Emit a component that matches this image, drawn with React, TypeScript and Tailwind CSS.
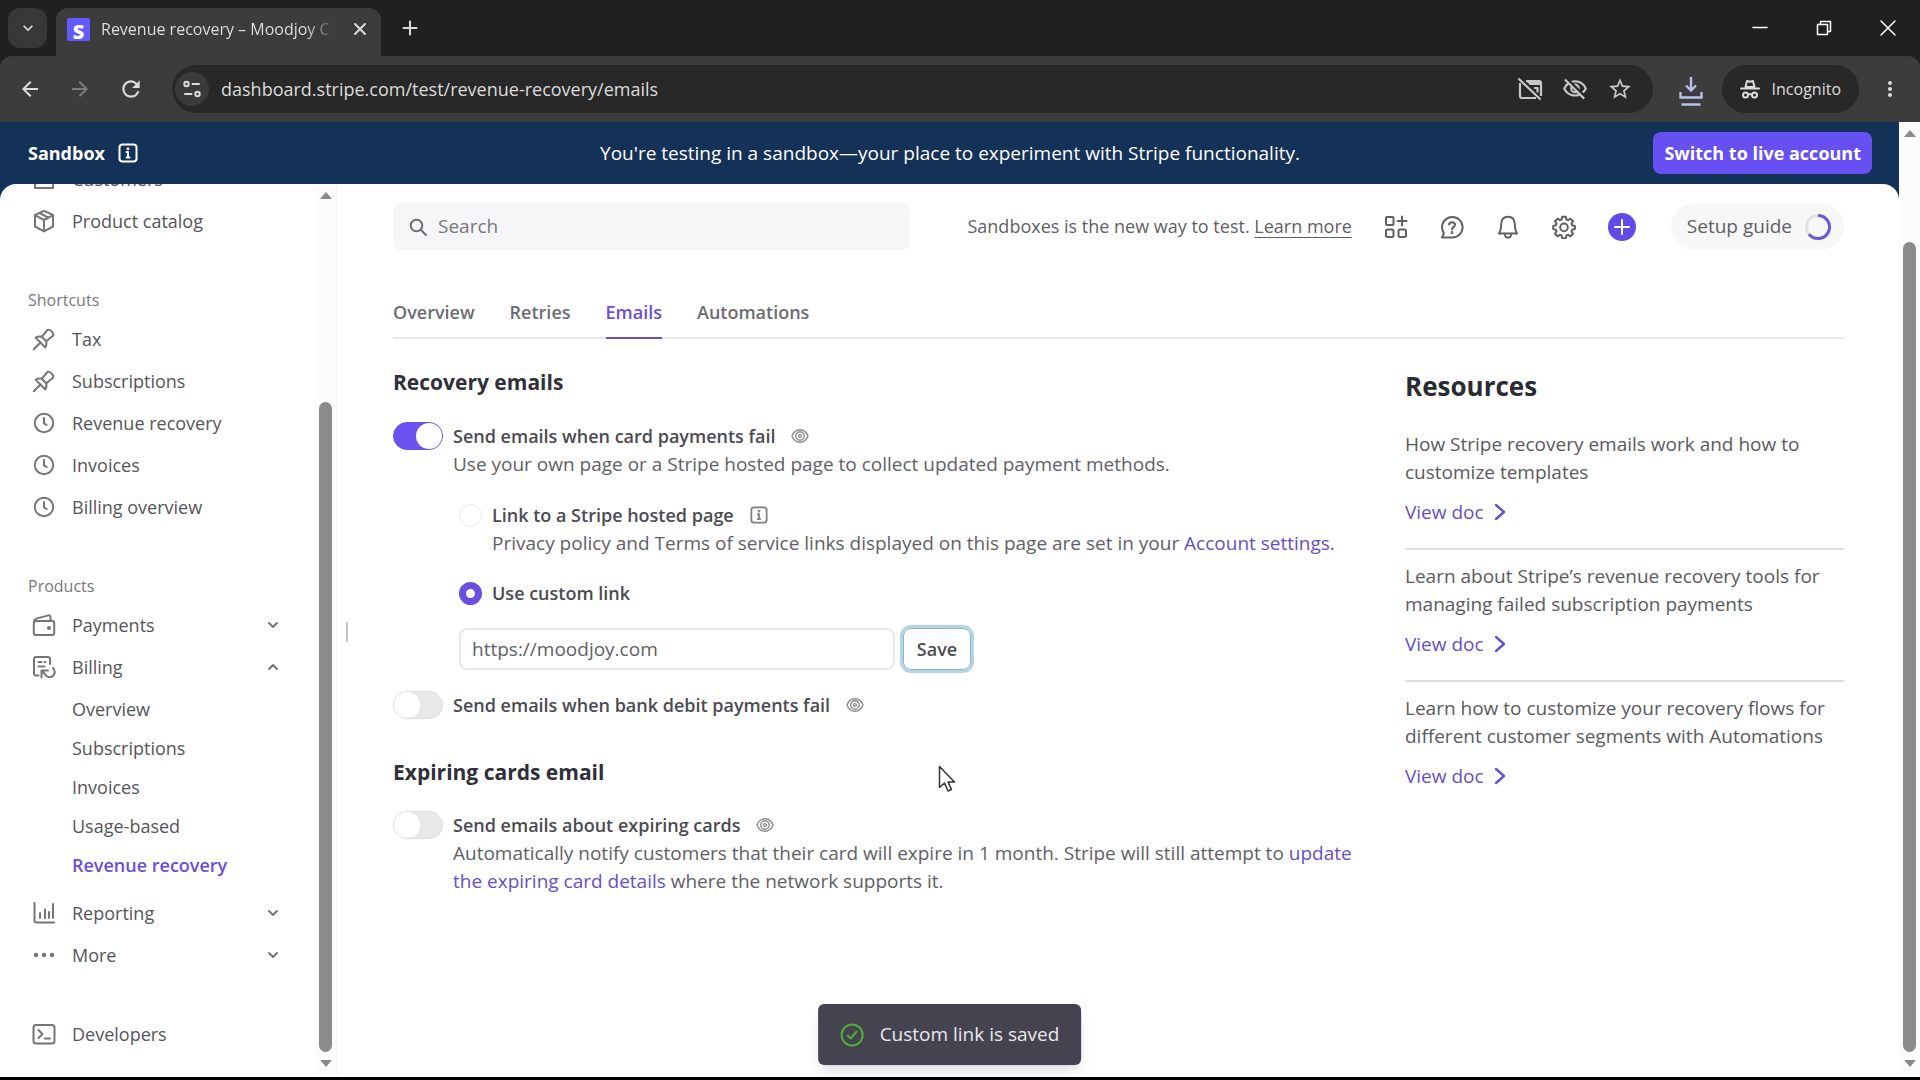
import React from "react";
import type { ReactNode } from "react";
import {
  MdArrowBack,
  MdArrowForward,
  MdRefresh,
  MdStarOutline,
  MdMoreVert,
  MdOutlineVisibilityOff,
  MdKeyboardArrowDown,
} from "react-icons/md";

type IconProps = { children: ReactNode; className?: string; box?: string; width?: number };

function Svg({ children, className = "size-6", box = "0 0 24 24", width = 2 }: IconProps) {
  return (
    <svg
      viewBox={box}
      className={`shrink-0 ${className}`}
      fill="none"
      stroke="currentColor"
      strokeWidth={width}
      strokeLinecap="round"
      strokeLinejoin="round"
      aria-hidden="true"
    >
      {children}
    </svg>
  );
}

const PersonIcon = () => (
  <Svg>
    <circle cx="12" cy="7" r="4" />
    <path d="M3 21v-2.5a4 4 0 0 1 4-4h10a4 4 0 0 1 4 4V21z" />
  </Svg>
);
const BoxIcon = () => (
  <Svg>
    <path d="M12 1.800 21 6v11.500L12 22.400 3 17.500V6z" />
    <path d="M3.300 6.400 12 11l8.700-4.600M12 11v11M7.500 4l8.800 4.600" />
  </Svg>
);
const PinIcon = () => (
  <Svg>
    <path d="M1.800 22.200 8.500 15.500" />
    <path d="M3.600 10.600c2.600-1.300 4.300-1.200 6.200-.9l4.500-5.200c.6-1.400 1.500-2.200 3-1.600 1.700.7 3.200 2.200 3.900 3.900.5 1.500-.3 2.400-1.600 3l-5.300 4.500c.4 2 .4 3.700-1 6.200z" />
    <path d="M9.800 9.700l4.500 4.600" />
  </Svg>
);
const ClockIcon = () => (
  <Svg>
    <circle cx="12" cy="12" r="9.200" />
    <path d="M12 7v5.300l2.600 1.700" />
  </Svg>
);
const WalletIcon = () => (
  <Svg>
    <rect x="1.800" y="8" width="20.400" height="14" rx="2" />
    <path d="M2 9.500c0-2.300.7-3.500 3-4.100l11.500-3c1.300-.3 2 .4 2 1.600V8" />
    <circle cx="17" cy="15" r="1" fill="currentColor" />
  </Svg>
);
const BillingIcon = () => (
  <Svg>
    <path d="M6.500 20.500H4a2 2 0 0 1-2-2V4a2 2 0 0 1 2-2h12a2 2 0 0 1 2 2v5" />
    <path d="M6.500 7h3M12.500 7h1M6.500 11.500h6" />
    <path d="M9.500 22.500v-7h6.500M10 16l4.500 5c3.500 2.600 8.200.3 8.200-4 0-1.700-.6-3-1.700-4" />
  </Svg>
);
const ReportIcon = () => (
  <Svg>
    <path d="M2.500 2v17.500a2 2 0 0 0 2 2H22M8 12v5M13 8.500V17M17 11v6M21 3v14" />
  </Svg>
);
const MoreIcon = () => (
  <Svg>
    <circle cx="4" cy="12" r="1.200" fill="currentColor" />
    <circle cx="12" cy="12" r="1.200" fill="currentColor" />
    <circle cx="20" cy="12" r="1.200" fill="currentColor" />
  </Svg>
);
const TerminalIcon = () => (
  <Svg>
    <rect x="1.500" y="3" width="21" height="18.500" rx="2.500" />
    <path d="m6.500 8 4 4-4 4M13 16.500h5" />
  </Svg>
);
const InfoSquare = ({ className = "size-5" }: { className?: string }) => (
  <Svg className={className} box="0 0 20 20">
    <rect x="1.500" y="1.500" width="17" height="17" rx="3" />
    <path d="M8.500 9H10v5.500M8.500 14.500h3" />
    <circle cx="10" cy="5.800" r=".5" fill="currentColor" />
  </Svg>
);
const EyeIcon = () => (
  <Svg className="size-[18px]" box="0 0 18 18" width={1.4}>
    <path d="M1 9c1.500-4 4.500-6.200 8-6.200S15.500 5 17 9c-1.500 4-4.500 6.200-8 6.200S2.500 13 1 9z" />
    <circle cx="9" cy="9" r="4.200" />
    <circle cx="9" cy="9" r="1.400" />
  </Svg>
);
const Chevron = ({ up = false }: { up?: boolean }) => (
  <Svg className="size-3" box="0 0 12 12" width={2}>
    <path d={up ? "M2 8l4-4 4 4" : "M2 4l4 4 4-4"} />
  </Svg>
);

function BrowserChrome() {
  return (
    <header className="shrink-0 bg-[#202020] text-[#dcdcdc]">
      <div className="flex h-14 items-end pl-2">
        <button aria-label="Search tabs" className="mb-2 grid h-10 w-[39px] place-items-center rounded-xl bg-[#383838]">
          <MdKeyboardArrowDown className="size-5" />
        </button>
        <div className="ml-[9px] flex h-12 w-[325px] items-center rounded-t-xl bg-[#3c3c3c] pr-3 pb-1.5 pl-[11px]">
          <span className="grid size-[23px] shrink-0 place-items-center rounded-xs bg-[#635bff] text-xl font-extrabold text-white">
            S
          </span>
          <span className="ml-[11px] w-[233px] shrink-0 bg-linear-to-r from-[#e3e3e3] from-88% to-[#4a4a4a] bg-clip-text text-base whitespace-nowrap text-transparent">
            Revenue recovery – Moodjoy C
          </span>
          <button aria-label="Close tab" className="ml-[18px]">
            <Svg className="size-4" box="0 0 16 16">
              <path d="m3 3 10 10M13 3 3 13" />
            </Svg>
          </button>
        </div>
        <button aria-label="New tab" className="mb-5 ml-[21px]">
          <Svg className="size-4" box="0 0 16 16">
            <path d="M8 1.500v13M1.500 8h13" />
          </Svg>
        </button>
        <div className="mb-5 ml-auto flex gap-12 pr-6 text-white">
          <button aria-label="Minimize">
            <Svg className="size-4" box="0 0 16 16" width={1.500}>
              <path d="M1 7.500h14" />
            </Svg>
          </button>
          <button aria-label="Restore">
            <Svg className="size-4" box="0 0 16 16" width={1.500}>
              <path d="M1.500 4.500h10v10h-10zM4.500 4V1.500h10v10H12" />
            </Svg>
          </button>
          <button aria-label="Close window">
            <Svg className="size-4" box="0 0 16 16" width={1.500}>
              <path d="M1 1l14 14M15 1 1 15" />
            </Svg>
          </button>
        </div>
      </div>
      <div className="flex h-[66px] items-center rounded-t-xl bg-[#3c3c3c] pr-[18px] pl-[18px]">
        <button aria-label="Back">
          <MdArrowBack className="size-6" />
        </button>
        <button aria-label="Forward" className="ml-[26px] text-[#7d7d7d]">
          <MdArrowForward className="size-6" />
        </button>
        <button aria-label="Reload" className="ml-[26px]">
          <MdRefresh className="size-[26px]" />
        </button>
        <div className="ml-[28px] flex h-12 flex-1 items-center rounded-full bg-[#282828] pr-5 pl-[3px]">
          <span className="grid size-[34px] shrink-0 place-items-center rounded-full bg-[#3a3a3a]">
            <Svg className="size-5" box="0 0 20 20">
              <circle cx="4.500" cy="5" r="2.200" />
              <path d="M10.500 5H17M3 15h6.500" />
              <circle cx="15.500" cy="15" r="2.200" />
            </Svg>
          </span>
          <input
            aria-label="Address"
            className="ml-3 min-w-0 flex-1 bg-transparent text-[18px] outline-none"
            defaultValue="dashboard.stripe.com/test/revenue-recovery/emails"
          />
          <div className="flex items-center gap-[19px] text-[#c7c7c7]">
            <Svg className="size-[26px]" box="0 0 26 26" width={2.200}>
              <path d="M3 7v13a2 2 0 0 0 2 2h14M9 5h13a2 2 0 0 1 2 2v13M1.500 2.500l22 21M17 12h3.500v4.500" strokeLinecap="butt" />
              <path d="M9 5h14v4H13z" fill="currentColor" stroke="none" />
            </Svg>
            <MdOutlineVisibilityOff className="size-[26px]" />
            <MdStarOutline className="size-[26px]" />
          </div>
        </div>
        <button aria-label="Downloads" className="mt-1 ml-[26px] text-[#b9c1ea]">
          <Svg className="h-[30px] w-6" box="0 0 24 30" width={2.400}>
            <path d="M12 1v13M7 9.500l5 5 5-5M1.500 16v5.500h21V16M2.500 28.500h19" strokeLinecap="butt" strokeLinejoin="miter" />
          </Svg>
        </button>
        <button aria-label="Incognito" className="ml-[19px] flex h-12 items-center gap-3 rounded-full bg-[#282828] px-[18px] text-base">
          <Svg className="size-5" box="0 0 20 20">
            <path d="M5.500 8 7 2l3 .8L13 2l1.500 6z" />
            <path d="M1 9.500h18M8.800 15.500c.8-.6 1.600-.6 2.400 0" />
            <circle cx="5.500" cy="16" r="2.500" />
            <circle cx="14.500" cy="16" r="2.500" />
          </Svg>
          Incognito
        </button>
        <button aria-label="Browser menu" className="ml-[19px]">
          <MdMoreVert className="size-6" />
        </button>
      </div>
    </header>
  );
}

function Scrollbar({ top }: { top: string }) {
  return (
    <div aria-hidden="true" className="flex w-[21px] shrink-0 flex-col items-center bg-[#fcfcfc] pt-2 pb-2.5">
      <span className="border-x-[6px] border-b-[7px] border-x-transparent border-b-[#8b8b8b]" />
      <span className={`mb-2 w-[13px] flex-1 rounded-full bg-[#8b8b8b] ${top}`} />
      <span className="border-x-[6px] border-t-[7px] border-x-transparent border-t-[#8b8b8b]" />
    </div>
  );
}

function NavItem({ icon, label, chevron }: { icon: ReactNode; label: string; chevron?: "up" | "down" }) {
  return (
    <a href="#" className="flex h-[42px] shrink-0 items-center pr-9 pl-1">
      <span className="text-[#75757a]">{icon}</span>
      <span className="ml-4">{label}</span>
      {chevron && (
        <span className="ml-auto text-[#75757a]">
          <Chevron up={chevron === "up"} />
        </span>
      )}
    </a>
  );
}

function NavHeading({ children }: { children: ReactNode }) {
  return <h3 className="mt-[46px] mb-1.5 shrink-0 text-base leading-6 text-[#77777c]">{children}</h3>;
}

const billingPages = ["Overview", "Subscriptions", "Invoices", "Usage-based", "Revenue recovery"];

function Sidebar() {
  return (
    <aside className="flex w-[337px] shrink-0 border-r border-[#f4f4f5]">
      <nav
        aria-label="Dashboard"
        className="flex min-w-0 flex-1 flex-col justify-end overflow-hidden pb-[22px] pl-7 text-[18px] text-[#55555a]"
      >
        <NavItem icon={<PersonIcon />} label="Customers" />
        <NavItem icon={<BoxIcon />} label="Product catalog" />
        <NavHeading>Shortcuts</NavHeading>
        <NavItem icon={<PinIcon />} label="Tax" />
        <NavItem icon={<PinIcon />} label="Subscriptions" />
        <NavItem icon={<ClockIcon />} label="Revenue recovery" />
        <NavItem icon={<ClockIcon />} label="Invoices" />
        <NavItem icon={<ClockIcon />} label="Billing overview" />
        <NavHeading>Products</NavHeading>
        <NavItem icon={<WalletIcon />} label="Payments" chevron="down" />
        <NavItem icon={<BillingIcon />} label="Billing" chevron="up" />
        <div className="mt-0.5 mb-[7px] flex shrink-0 flex-col pl-[44px]">
          {billingPages.map((page) => (
            <a
              key={page}
              href="#"
              className="flex h-[39px] items-center aria-[current=page]:font-semibold aria-[current=page]:text-[#6a4fd6]"
              aria-current={page === "Revenue recovery" ? "page" : undefined}
            >
              {page}
            </a>
          ))}
        </div>
        <NavItem icon={<ReportIcon />} label="Reporting" chevron="down" />
        <NavItem icon={<MoreIcon />} label="More" chevron="down" />
        <div className="mt-[37px]">
          <NavItem icon={<TerminalIcon />} label="Developers" />
        </div>
      </nav>
      <Scrollbar top="mt-[203px]" />
    </aside>
  );
}

function TopBar() {
  return (
    <div className="flex h-[47px] items-center text-[18px] text-[#5f5f64]">
      <label className="flex h-full w-[517px] items-center gap-[11px] rounded-lg bg-[#f6f6f8] pl-4">
        <Svg className="size-[18px] text-[#6b6b70]" box="0 0 18 18" width={2}>
          <circle cx="7.500" cy="7.500" r="5.800" />
          <path d="m12 12 5 5" />
        </Svg>
        <input
          aria-label="Search"
          placeholder="Search"
          className="min-w-0 flex-1 bg-transparent text-[19px] outline-none placeholder:text-[#77777c]"
        />
      </label>
      <p className="ml-auto whitespace-nowrap">
        Sandboxes is the new way to test.{" "}
        <a href="#" className="underline underline-offset-4">
          Learn more
        </a>
      </p>
      <div className="ml-8 flex items-center gap-8">
        <button aria-label="Apps">
          <Svg>
            <rect x="2" y="2" width="7.500" height="8" rx="1" />
            <rect x="2" y="14.500" width="7.500" height="7.500" rx="1.500" />
            <rect x="14.500" y="14.500" width="7.500" height="7.500" rx="1.500" />
            <path d="M18 1.500v9M13.500 6h9" />
          </Svg>
        </button>
        <button aria-label="Help">
          <Svg>
            <path d="M2 22.500h10.500A10.300 10.300 0 1 0 2 12.200c0 2.500.8 4.500 2 6.100z" />
            <path d="M9 9.600C9.300 8 10.500 7.200 12 7.200c1.700 0 3 1 3 2.600 0 2.200-3 2.400-3 4.600" />
            <circle cx="12" cy="17.500" r=".5" fill="currentColor" />
          </Svg>
        </button>
        <button aria-label="Notifications">
          <Svg>
            <path d="M3 18.500c1.600-2 2-4 2.200-9.500C5.400 4.500 8 1.800 12 1.800s6.600 2.700 6.800 7.200c.2 5.500.6 7.500 2.200 9.500z" />
            <path d="M9 20c.2 1.700 1.300 2.700 3 2.700s2.800-1 3-2.700" />
          </Svg>
        </button>
        <button aria-label="Settings">
          <Svg>
            <path d="m10.200 1.800h3.600l.6 2.700 1.700.7 2.400-1.500 2.500 2.500-1.500 2.400.7 1.700 2.700.6v3.200l-2.700.6-.7 1.700 1.500 2.400-2.500 2.500-2.400-1.500-1.700.7-.6 2.700h-3.600l-.6-2.700-1.700-.7-2.400 1.500L3 18.800l1.500-2.400-.7-1.700-2.600-.6v-3.200l2.600-.6.7-1.700L3 6.200l2.500-2.500 2.400 1.500 1.700-.7z" />
            <circle cx="12" cy="12.400" r="3.800" />
          </Svg>
        </button>
      </div>
      <button aria-label="Create" className="ml-8 grid size-7 place-items-center rounded-full bg-[#5f4ce6] text-white">
        <Svg className="size-4" box="0 0 16 16">
          <path d="M8 1v14M1 8h14" />
        </Svg>
      </button>
      <button className="ml-[35px] flex h-full items-center gap-3 rounded-full bg-[#f7f7f8] pr-3 pl-4 text-[19px] whitespace-nowrap">
        Setup guide
        <Svg className="size-7" box="0 0 28 28" width={3}>
          <circle cx="14" cy="14" r="11.500" stroke="#e2e2e6" />
          <path d="M14 2.500a11.500 11.500 0 1 1-9 18.600" stroke="#6f58d8" strokeLinecap="butt" />
        </Svg>
      </button>
    </div>
  );
}

function Toggle({ id, on = false }: { id: string; on?: boolean }) {
  return (
    <input
      id={id}
      type="checkbox"
      role="switch"
      defaultChecked={on}
      className="h-7 w-[50px] shrink-0 appearance-none rounded-full border border-[#dedee1] bg-[#e8e8ea] before:block before:size-[26px] before:rounded-full before:bg-white checked:border-[#6a4fe8] checked:bg-[#6b52f0] checked:before:translate-x-[22px]"
    />
  );
}

function Setting({ id, label, on, children }: { id: string; label: string; on?: boolean; children?: ReactNode }) {
  return (
    <div className="flex gap-[10px]">
      <Toggle id={id} on={on} />
      <div className="min-w-0">
        <div className="flex items-center gap-4">
          <label htmlFor={id} className="text-[18px] font-semibold text-[#4b4b52]">
            {label}
          </label>
          <button aria-label={`Preview: ${label}`} className="text-[#8a8a8f]">
            <EyeIcon />
          </button>
        </div>
        {children}
      </div>
    </div>
  );
}

const radioClass =
  "mt-[3px] size-[23px] shrink-0 appearance-none rounded-full border border-[#e6e6e8] bg-white checked:border-[7px] checked:border-[#6a4fe0]";

function EmailSettings() {
  return (
    <div className="text-[19px] leading-7 text-[#606066]">
      <h2 className="mt-[29px] mb-[26px] text-[21px] font-bold text-[#30303a]">Recovery emails</h2>
      <Setting id="card-fail" label="Send emails when card payments fail" on>
        <p>Use your own page or a Stripe hosted page to collect updated payment methods.</p>
      </Setting>
      <div className="pl-[66px]">
        <div className="mt-[23px] flex gap-[10px]">
          <input id="hosted" type="radio" name="link" className={radioClass} />
          <div>
            <div className="flex items-center gap-4">
              <label htmlFor="hosted" className="text-[18px] font-semibold text-[#4b4b52]">
                Link to a Stripe hosted page
              </label>
              <InfoSquare className="size-[18px] text-[#808086]" />
            </div>
            <p>
              Privacy policy and Terms of service links displayed on this page are set in your{" "}
              <a href="#" className="text-[#6650c4]">
                Account settings
              </a>
              .
            </p>
          </div>
        </div>
        <div className="mt-[22px] flex gap-[10px]">
          <input id="custom" type="radio" name="link" defaultChecked className={radioClass} />
          <label htmlFor="custom" className="text-[18px] font-semibold text-[#4b4b52]">
            Use custom link
          </label>
        </div>
        <div className="mt-[21px] flex gap-2">
          <input
            aria-label="Custom link"
            defaultValue="https://moodjoy.com"
            className="h-[42px] w-[436px] rounded-lg border-2 border-[#e8e8ea] px-[11px] outline-none"
          />
          <button className="h-[42px] w-[68px] rounded-lg border border-[#8fb4c8] text-[18px] font-semibold text-[#4b4b52] ring-3 ring-[#b4d5e4]">
            Save
          </button>
        </div>
      </div>
      <div className="mt-[21px]">
        <Setting id="bank-fail" label="Send emails when bank debit payments fail" />
      </div>
      <h2 className="mt-[39px] mb-[25px] text-[21px] font-bold text-[#30303a]">Expiring cards email</h2>
      <Setting id="expiring" label="Send emails about expiring cards">
        <p>
          Automatically notify customers that their card will expire in 1 month. Stripe will still attempt to{" "}
          <a href="#" className="text-[#6650c4]">
            update the expiring card details
          </a>{" "}
          where the network supports it.
        </p>
      </Setting>
    </div>
  );
}

const docs = [
  "How Stripe recovery emails work and how to customize templates",
  "Learn about Stripe’s revenue recovery tools for managing failed subscription payments",
  "Learn how to customize your recovery flows for different customer segments with Automations",
];

function Resources() {
  return (
    <aside className="text-[19px] leading-7 text-[#5a5a60]">
      <h2 className="mt-[31px] mb-4 text-[26px] leading-8 font-bold text-[#2b2b33]">Resources</h2>
      <ul className="divide-y-2 divide-[#dfdfe1]">
        {docs.map((text) => (
          <li key={text} className="pt-3 pb-[22px]">
            <p>{text}</p>
            <a href="#" className="mt-3 flex items-center gap-2.5 text-[#6650c4]">
              View doc
              <Svg className="h-[18px] w-3" box="0 0 12 18" width={2.400}>
                <path d="m2 2 8 7-8 7" />
              </Svg>
            </a>
          </li>
        ))}
      </ul>
    </aside>
  );
}

const tabs = ["Overview", "Retries", "Emails", "Automations"];

export default function App() {
  return (
    <div className="flex h-screen flex-col overflow-hidden bg-white font-['Segoe_UI','Open_Sans',sans-serif]">
      <BrowserChrome />
      <div className="flex min-h-0 flex-1 border-b-3 border-black">
        <div className="relative flex min-w-0 flex-1 flex-col bg-[#143157]">
          <div className="grid h-[62px] shrink-0 grid-cols-[1fr_auto_1fr] items-center pr-[27px] pl-7 text-[18px] text-white">
            <span className="flex items-center gap-[13px] font-bold">
              Sandbox <InfoSquare className="size-5" />
            </span>
            <span className="text-[19px]">
              You're testing in a sandbox—your place to experiment with Stripe functionality.
            </span>
            <button className="h-[42px] justify-self-end rounded-lg bg-[#6650f2] px-[11px] font-bold whitespace-nowrap">
              Switch to live account
            </button>
          </div>
          <div className="flex min-h-0 flex-1 rounded-t-2xl bg-white">
            <Sidebar />
            <span aria-hidden="true" className="mt-[438px] ml-[9px] h-5 w-0.5 bg-[#c4c4c8]" />
            <main className="min-w-0 flex-1 pt-[19px] pr-[55px] pl-[45px]">
              <TopBar />
              <nav
                aria-label="Revenue recovery"
                className="mt-[38px] flex gap-[35px] border-b-2 border-[#e8e8ea] text-[18px] font-semibold text-[#6c6c72]"
              >
                {tabs.map((tab) => (
                  <a
                    key={tab}
                    href="#"
                    aria-current={tab === "Emails" ? "page" : undefined}
                    className="-mb-0.5 flex h-[51px] items-center border-b-2 border-transparent aria-[current=page]:border-[#6a50c8] aria-[current=page]:text-[#6a4fd6]"
                  >
                    {tab}
                  </a>
                ))}
              </nav>
              <div className="grid grid-cols-[minmax(0,1fr)_439px] gap-12">
                <EmailSettings />
                <Resources />
              </div>
            </main>
          </div>
          <div
            role="status"
            className="absolute bottom-3 left-1/2 flex h-[61px] -translate-x-1/2 items-center gap-4 rounded-md bg-[#44434f] px-[22px] text-[19px] whitespace-nowrap text-[#e9e9ee] shadow-lg"
          >
            <Svg className="size-6 text-[#4fae35]">
              <circle cx="12" cy="12" r="10.500" />
              <path d="m7.500 12.500 3 3 6-7" />
            </Svg>
            Custom link is saved
          </div>
        </div>
        <Scrollbar top="mt-[105px]" />
      </div>
      <svg viewBox="0 0 18 28" className="absolute top-[765px] left-[938px] h-7 w-[18px]" aria-hidden="true">
        <path
          d="M1.500 1.500v21l5-4.500 3.500 8 3.500-1.500-3.500-7.500h6.500z"
          fill="#fff"
          stroke="#333"
          strokeWidth="1.500"
          strokeLinejoin="round"
        />
      </svg>
    </div>
  );
}
